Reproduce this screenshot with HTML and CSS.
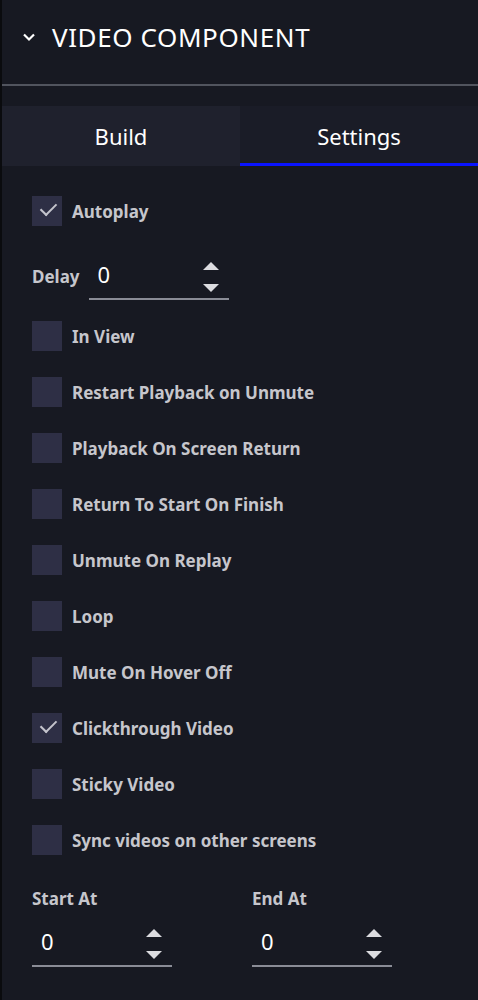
FILE: index.html
```html
<!DOCTYPE html>
<html lang="en">
<head>
    <meta charset="UTF-8">
    <meta name="viewport" content="width=device-width, initial-scale=1.0">
    <title>Video Component</title>
    <link rel="stylesheet" href="styles.css">
</head>
<body>

    <div class="panel">
        <!-- Header -->
        <div class="header">
            <svg class="chevron" width="14" height="10" viewBox="0 0 14 10">
                <path d="M2 2.5 L7 7.5 L12 2.5" fill="none" stroke="#ffffff" stroke-width="2.2"/>
            </svg>
            <h1>VIDEO COMPONENT</h1>
        </div>
        <div class="divider"></div>

        <!-- Tabs -->
        <div class="tabs">
            <div class="tab">Build</div>
            <div class="tab active">Settings</div>
        </div>

        <div class="settings">
            <label class="check-row">
                <span class="box checked"></span>
                <span>Autoplay</span>
            </label>

            <div class="delay-row">
                <span class="field-label">Delay</span>
                <div class="number-field">
                    <input type="text" value="0">
                    <span class="spinner"><i class="up"></i><i class="down"></i></span>
                </div>
            </div>

            <label class="check-row"><span class="box"></span><span>In View</span></label>
            <label class="check-row"><span class="box"></span><span>Restart Playback on Unmute</span></label>
            <label class="check-row"><span class="box"></span><span>Playback On Screen Return</span></label>
            <label class="check-row"><span class="box"></span><span>Return To Start On Finish</span></label>
            <label class="check-row"><span class="box"></span><span>Unmute On Replay</span></label>
            <label class="check-row"><span class="box"></span><span>Loop</span></label>
            <label class="check-row"><span class="box"></span><span>Mute On Hover Off</span></label>
            <label class="check-row"><span class="box checked"></span><span>Clickthrough Video</span></label>
            <label class="check-row"><span class="box"></span><span>Sticky Video</span></label>
            <label class="check-row"><span class="box"></span><span>Sync videos on other screens</span></label>

            <!-- Start / End -->
            <div class="range-row">
                <div class="range-col">
                    <span class="field-label">Start At</span>
                    <div class="number-field">
                        <input type="text" value="0">
                        <span class="spinner"><i class="up"></i><i class="down"></i></span>
                    </div>
                </div>
                <div class="range-col">
                    <span class="field-label">End At</span>
                    <div class="number-field">
                        <input type="text" value="0">
                        <span class="spinner"><i class="up"></i><i class="down"></i></span>
                    </div>
                </div>
            </div>
        </div>
    </div>

</body>
</html>
```

FILE: styles.css
```css
body {
    margin: 0;
    background-color: #171922;
    font-family: "Noto Sans", "Open Sans", sans-serif;
    color: #c6c6cc;
}

.panel {
    border-left: 2px solid #0a0b0e;
    min-height: 1000px;
    box-sizing: border-box;
}

.header {
    display: flex;
    align-items: center;
    height: 84px;
    padding-left: 20px;
    padding-bottom: 11px;
    box-sizing: border-box;
}

.chevron {
    margin-right: 16px;
}

.header h1 {
    margin: 0;
    font-size: 26px;
    font-weight: 400;
    color: #ffffff;
    letter-spacing: 0.6px;
}

.divider {
    height: 2px;
    background-color: #51545e;
}

.tabs {
    display: flex;
    margin-top: 20px;
    height: 60px;
}

.tab {
    flex: 1;
    display: flex;
    align-items: center;
    justify-content: center;
    font-size: 22px;
    color: #ffffff;
    background-color: #1f212d;
    box-sizing: border-box;
}

.tab.active {
    background-color: #1a1c27;
    border-bottom: 3px solid #0a14ff;
    padding-top: 3px;
}

.settings {
    padding: 30px 0 0 30px;
}

.check-row {
    display: flex;
    align-items: center;
    height: 30px;
    margin-bottom: 26px;
    font-size: 17px;
    font-weight: 700;
}

.box {
    width: 30px;
    height: 30px;
    background-color: #2e2f45;
    margin-right: 10px;
    position: relative;
}

.box.checked::after {
    content: "";
    position: absolute;
    left: 9px;
    top: 7px;
    width: 13px;
    height: 7px;
    border-left: 2px solid #c4c4cc;
    border-bottom: 2px solid #c4c4cc;
    transform: rotate(-45deg) scaleX(1.05);
}

.field-label {
    font-size: 17px;
    font-weight: 700;
}

.delay-row {
    display: flex;
    align-items: center;
    gap: 9px;
    margin-top: 2px;
    margin-bottom: 21px;
}

.number-field {
    display: flex;
    align-items: center;
    width: 140px;
    height: 48px;
    border-bottom: 2px solid #8a8c96;
    box-sizing: border-box;
}

.number-field input {
    flex: 1;
    width: 0;
    background: transparent;
    border: none;
    outline: none;
    color: #ffffff;
    font-family: "Noto Sans", "Open Sans", sans-serif;
    font-size: 22px;
    padding: 0 0 2px 9px;
}

.spinner {
    display: flex;
    flex-direction: column;
    gap: 14px;
    margin-right: 10px;
    margin-top: 4px;
}

.spinner i {
    width: 0;
    height: 0;
    border-left: 8px solid transparent;
    border-right: 8px solid transparent;
}

.spinner .up {
    border-bottom: 8px solid #dcdce0;
}

.spinner .down {
    border-top: 8px solid #dcdce0;
}

.range-row {
    display: flex;
    gap: 80px;
    margin-top: 32px;
}

.range-col {
    display: flex;
    flex-direction: column;
}

.range-col .field-label {
    margin-bottom: 9px;
}
```
